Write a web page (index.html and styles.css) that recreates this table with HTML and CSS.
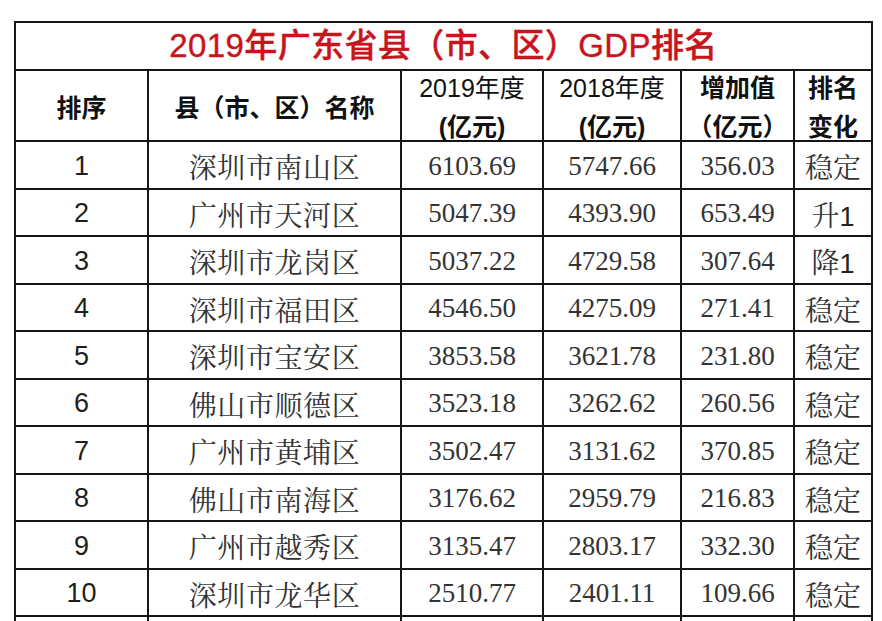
FILE: index.html
```html
<!DOCTYPE html>
<html lang="zh-CN">
<head>
<meta charset="utf-8">
<title>2019年广东省县（市、区）GDP排名</title>
<link rel="stylesheet" href="styles.css">
</head>
<body>
<table class="gdp">
  <colgroup>
    <col class="c-rank">
    <col class="c-name">
    <col class="c-v19">
    <col class="c-v18">
    <col class="c-inc">
    <col class="c-chg">
  </colgroup>
  <thead>
    <tr class="title-row"><th colspan="6" class="title">2019年广东省县（市、区）GDP排名</th></tr>
    <tr class="head-row">
      <th class="h-bold">排序</th>
      <th class="h-bold">县（市、区）名称</th>
      <th><div class="two"><span class="l1">2019年度</span><span class="l2">(亿元)</span></div></th>
      <th><div class="two"><span class="l1">2018年度</span><span class="l2">(亿元)</span></div></th>
      <th><div class="two bold"><span>增加值</span><span>（亿元）</span></div></th>
      <th><div class="two bold"><span>排名</span><span>变化</span></div></th>
    </tr>
  </thead>
  <tbody>
    <tr><td class="rank">1</td><td class="name">深圳市南山区</td><td class="num">6103.69</td><td class="num">5747.66</td><td class="num">356.03</td><td class="chg">稳定</td></tr>
    <tr><td class="rank">2</td><td class="name">广州市天河区</td><td class="num">5047.39</td><td class="num">4393.90</td><td class="num">653.49</td><td class="chg">升<span class="d">1</span></td></tr>
    <tr><td class="rank">3</td><td class="name">深圳市龙岗区</td><td class="num">5037.22</td><td class="num">4729.58</td><td class="num">307.64</td><td class="chg">降<span class="d">1</span></td></tr>
    <tr><td class="rank">4</td><td class="name">深圳市福田区</td><td class="num">4546.50</td><td class="num">4275.09</td><td class="num">271.41</td><td class="chg">稳定</td></tr>
    <tr><td class="rank">5</td><td class="name">深圳市宝安区</td><td class="num">3853.58</td><td class="num">3621.78</td><td class="num">231.80</td><td class="chg">稳定</td></tr>
    <tr><td class="rank">6</td><td class="name">佛山市顺德区</td><td class="num">3523.18</td><td class="num">3262.62</td><td class="num">260.56</td><td class="chg">稳定</td></tr>
    <tr><td class="rank">7</td><td class="name">广州市黄埔区</td><td class="num">3502.47</td><td class="num">3131.62</td><td class="num">370.85</td><td class="chg">稳定</td></tr>
    <tr><td class="rank">8</td><td class="name">佛山市南海区</td><td class="num">3176.62</td><td class="num">2959.79</td><td class="num">216.83</td><td class="chg">稳定</td></tr>
    <tr><td class="rank">9</td><td class="name">广州市越秀区</td><td class="num">3135.47</td><td class="num">2803.17</td><td class="num">332.30</td><td class="chg">稳定</td></tr>
    <tr><td class="rank">10</td><td class="name">深圳市龙华区</td><td class="num">2510.77</td><td class="num">2401.11</td><td class="num">109.66</td><td class="chg">稳定</td></tr>
    <tr class="cut"><td></td><td></td><td></td><td></td><td></td><td></td></tr>
  </tbody>
</table>
</body>
</html>
```
FILE: styles.css
```css
html, body {
  margin: 0;
  padding: 0;
  background: #ffffff;
  overflow: hidden;
}

body {
  height: 621px;
  font-family: "Liberation Sans", "Noto Sans CJK SC", sans-serif;
}

.gdp {
  border-collapse: collapse;
  table-layout: fixed;
  width: 859px;
  margin: 21px 0 0 14px;
  border: 2px solid #151515;
}

.gdp th,
.gdp td {
  border: 2px solid #151515;
  padding: 0;
  text-align: center;
  vertical-align: middle;
  white-space: nowrap;
  overflow: visible;
}

.c-rank { width: 133px; }
.c-name { width: 253px; }
.c-v19 { width: 142px; }
.c-v18 { width: 138px; }
.c-inc { width: 113px; }
.c-chg { width: 78px; }

.title-row { height: 48px; }

.title {
  font-size: 33px;
  font-weight: 500;
  color: #c8141c;
  -webkit-text-stroke: 0.4px #c8141c;
  line-height: 40px;
  padding-right: 10px;
  letter-spacing: 0.4px;
}

.head-row { height: 71px; }

.head-row th {
  font-size: 25px;
  color: #111;
  font-weight: normal;
}

.head-row th.h-bold {
  font-weight: bold;
}

.two {
  height: 67px;
  display: flex;
  flex-direction: column;
  justify-content: center;
  align-items: center;
  line-height: 39px;
  padding-top: 5px;
  box-sizing: border-box;
}

.two span {
  display: block;
  height: 39px;
  flex: none;
}

.two .l2,
.two.bold span {
  font-weight: bold;
}

.gdp tbody tr {
  height: 47.5px;
}

.gdp tbody td {
  padding-top: 3px;
}

.gdp tbody tr.cut {
  height: 20px;
}

.rank {
  font-family: "Liberation Sans", sans-serif;
  font-size: 27px;
  color: #1e1e1e;
}

.name {
  font-family: "Noto Serif CJK SC", "Noto Sans CJK SC", serif;
  font-size: 28px;
  letter-spacing: 0.6px;
  color: #333;
  padding-left: 2px;
}

.num {
  font-family: "Liberation Serif", serif;
  font-size: 27px;
  color: #333;
}

.chg {
  font-family: "Noto Serif CJK SC", "Noto Sans CJK SC", serif;
  font-size: 28px;
  color: #333;
}

.chg .d {
  font-family: "Liberation Sans", sans-serif;
  font-size: 27px;
  color: #222;
}
```
